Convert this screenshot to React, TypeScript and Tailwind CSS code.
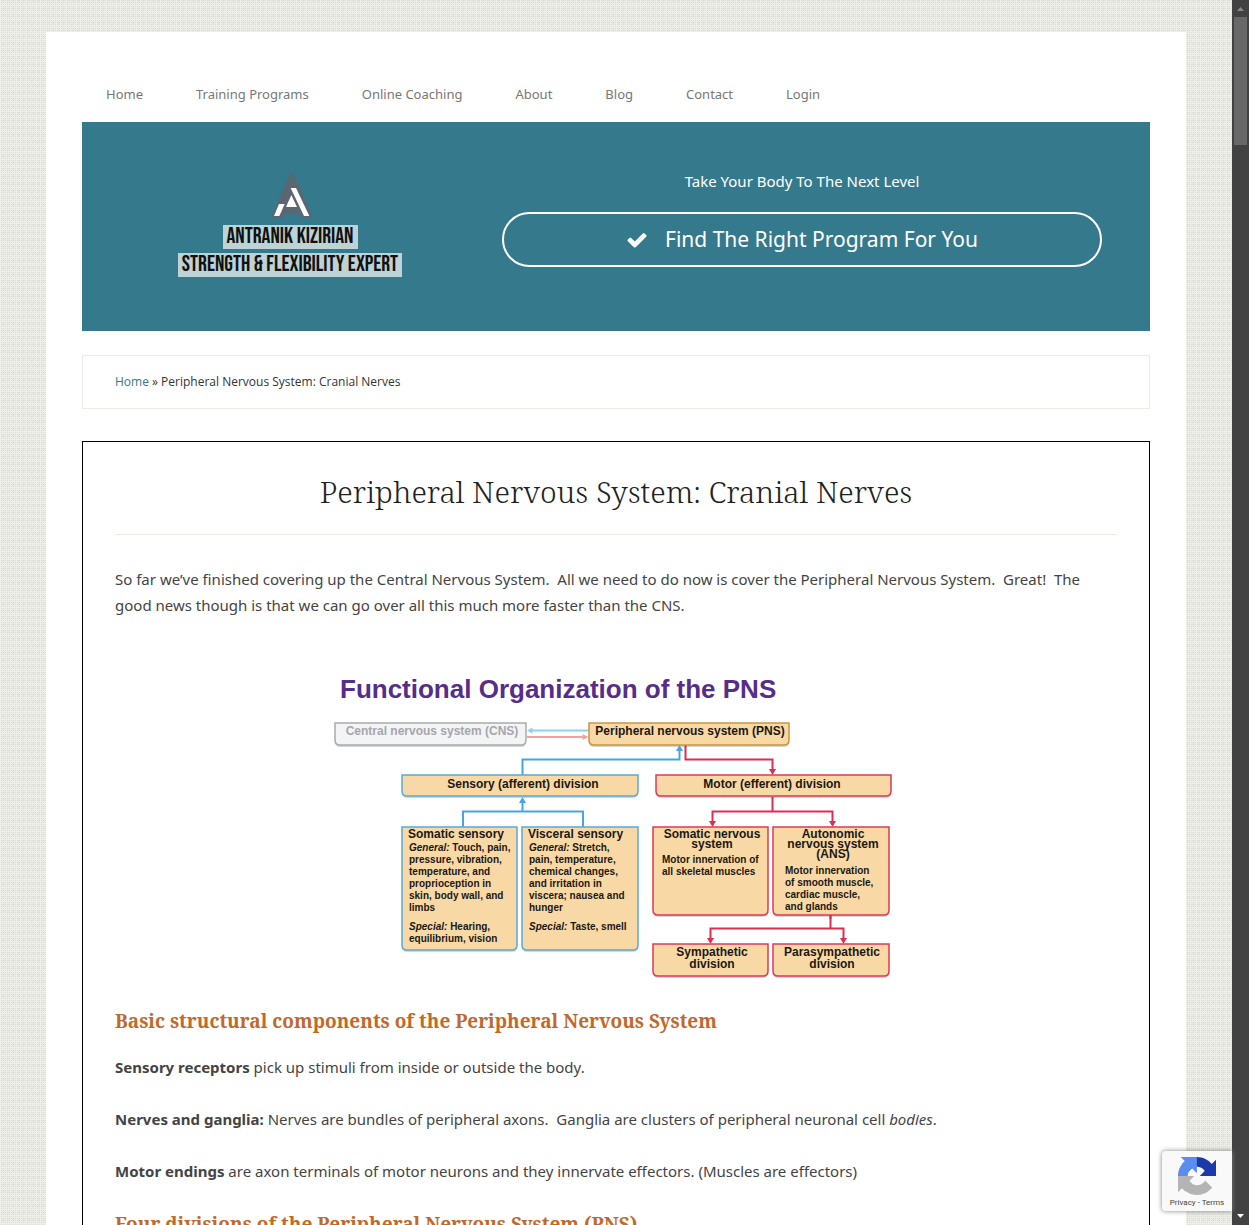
import React from 'react';

const SANS = "font-['Droid_Sans','Noto_Sans',sans-serif]";
const SLAB = "font-['Roboto_Slab','Noto_Serif',serif]";

const NAV = ['Home', 'Training Programs', 'Online Coaching', 'About', 'Blog', 'Contact', 'Login'];

function Header() {
  return (
    <nav aria-label="Main">
      <ul className="flex flex-wrap gap-x-[53px] px-6 pt-[51px] pb-[17px] text-[13px] leading-[22px] text-[#777]">
        {NAV.map((item) => (
          <li key={item}>
            <a href="#">{item}</a>
          </li>
        ))}
      </ul>
    </nav>
  );
}

function LogoMark() {
  return (
    <svg className="mt-[3px] mb-[2px] ml-1 h-[46px] w-[44px]" viewBox="330 39 132 138" aria-hidden="true">
      <path d="M389 46Q395 38 402 46L459 173H424L418 160H374L368 173H333Z" fill="#5b6670" />
      <path d="M392 84H408L448 168H432Z" fill="#fff" />
      <path d="M394 105L411 141H378Z" fill="#fff" />
      <path d="M357 132H374L358 168H342Z" fill="#fff" />
    </svg>
  );
}

function Banner() {
  return (
    <section className="flex justify-between bg-[#35798c] px-12 pt-12 pb-[54px]">
      <a
        href="#"
        className="flex w-80 flex-col items-center gap-1 font-['Bebas_Neue','Open_Sans_Condensed',sans-serif] text-[22px] leading-6 text-[#111]"
      >
        <LogoMark />
        <span className="bg-[#bdd3d5] px-1">ANTRANIK KIZIRIAN</span>
        <span className="bg-[#bdd3d5] px-1">STRENGTH &amp; FLEXIBILITY EXPERT</span>
      </a>
      <div className="flex w-[600px] flex-col text-center text-white">
        <p className="text-[15px] leading-[22px]">Take Your Body To The Next Level</p>
        <a
          href="#"
          className="mt-5 flex h-[55px] items-center justify-center gap-[17px] rounded-full border-2 border-white text-[21px]"
        >
          <svg className="h-[22px] w-[22px]" viewBox="0 0 1792 1792" fill="currentColor" aria-hidden="true">
            <path d="M1671 566q0 40-28 68l-724 724-136 136q-28 28-68 28t-68-28l-136-136-362-362q-28-28-28-68t28-68l136-136q28-28 68-28t68 28l294 295 656-657q28-28 68-28t68 28l136 136q28 28 28 68z" />
          </svg>
          Find The Right Program For You
        </a>
      </div>
    </section>
  );
}

type Tone = 'gray' | 'gold' | 'blue' | 'red';
const STROKE: Record<Tone, string> = { gray: '#a9abae', gold: '#c9963f', blue: '#55abdb', red: '#dc3a58' };

function Box({ x, y, w, h, tone }: { x: number; y: number; w: number; h: number; tone: Tone }) {
  const d = `M${x} ${y}h${w}v${h - 5}q0 5 -5 5h${10 - w}q-5 0 -5 -5z`;
  return (
    <g>
      <path d={d} transform="translate(0 2)" fill="#000" opacity="0.16" />
      <path d={d} fill={tone === 'gray' ? '#f3f4f6' : '#f8d9a6'} stroke={STROKE[tone]} strokeWidth="1.5" />
    </g>
  );
}

function Lines({ x, y, step, rows, anchor = 'start', size = 10 }: {
  x: number; y: number; step: number; rows: React.ReactNode[]; anchor?: 'start' | 'middle'; size?: number;
}) {
  return (
    <text x={x} y={y} textAnchor={anchor} fontSize={size}>
      {rows.map((row, i) => (
        <tspan key={i} x={x} y={y + i * step}>{row}</tspan>
      ))}
    </text>
  );
}

const It = ({ children }: { children: React.ReactNode }) => <tspan fontStyle="italic">{children}</tspan>;

function Diagram() {
  return (
    <svg
      className="mx-auto block w-full max-w-[600px] font-['Liberation_Sans',Arial,sans-serif]"
      viewBox="316 650 600 340"
      fontWeight="700"
      fill="#1c1712"
      role="img"
      aria-label="Functional Organization of the PNS"
    >
      <text x="340" y="699" fontSize="26" fill="#562d88">Functional Organization of the PNS</text>

      <g fill="none" strokeWidth="2">
        <path d="M589 731.5H531" stroke="#92cff4" />
        <path d="M527 738H584" stroke="#f0a3a3" />
        <g stroke="#45a5e6">
          <path d="M522.5 776V760.5H679.5V752" />
          <path d="M463 828V812.5H583V828M522.5 812.5V804" />
        </g>
        <g stroke="#dc2f50">
          <path d="M685.5 746V760.5H772.5V770" />
          <path d="M772.5 798V812.5M712.5 823V812.5H832.5V823" />
          <path d="M830.5 916V929.5M710.5 940V929.5H843.5V940" />
        </g>
      </g>
      <path d="M527 731.5l5.500-3v6z" fill="#92cff4" />
      <path d="M588.500 738l-6-3v6z" fill="#f0a3a3" />

      <Box x={335} y={724} w={191} h={22} tone="gray" />
      <Box x={589} y={724} w={200} h={22} tone="gold" />
      <Box x={402} y={776} w={236} h={21} tone="blue" />
      <Box x={656} y={776} w={235} h={21} tone="red" />
      <Box x={402} y={828} w={115} h={123} tone="blue" />
      <Box x={522} y={828} w={116} h={123} tone="blue" />
      <Box x={653} y={828} w={115} h={88} tone="red" />
      <Box x={773} y={828} w={116} h={88} tone="red" />
      <Box x={653} y={945} w={115} h={32} tone="red" />
      <Box x={773} y={945} w={116} h={32} tone="red" />

      <g fill="#45a5e6">
        <path d="M679.5 746l3.500 6h-7z" />
        <path d="M522.5 798l3.500 6h-7z" />
      </g>
      <g fill="#dc2f50">
        <path d="M772.5 776l-3.500-6h7z" />
        <path d="M712.5 828l-3.500-6h7z" />
        <path d="M832.5 828l-3.500-6h7z" />
        <path d="M710.5 945l-3.500-6h7z" />
        <path d="M843.5 945l-3.500-6h7z" />
        <path d="M829.500 916h2v4h-2z" />
      </g>

      <g fontSize="12" textAnchor="middle">
        <text x="432" y="736" fill="#a6a6aa">Central nervous system (CNS)</text>
        <text x="690" y="736">Peripheral nervous system (PNS)</text>
        <text x="523" y="789">Sensory (afferent) division</text>
        <text x="772" y="789">Motor (efferent) division</text>
      </g>
      <text x="408" y="839" fontSize="12">Somatic sensory</text>
      <Lines x={409} y={852} step={12} rows={[
        <><It>General:</It> Touch, pain,</>, 'pressure, vibration,', 'temperature, and', 'proprioception in', 'skin, body wall, and', 'limbs',
      ]} />
      <Lines x={409} y={931} step={12} rows={[<><It>Special:</It> Hearing,</>, 'equilibrium, vision']} />
      <text x="528" y="839" fontSize="12">Visceral sensory</text>
      <Lines x={529} y={852} step={12} rows={[
        <><It>General:</It> Stretch,</>, 'pain, temperature,', 'chemical changes,', 'and irritation in', 'viscera; nausea and', 'hunger',
      ]} />
      <Lines x={529} y={931} step={12} rows={[<><It>Special:</It> Taste, smell</>]} />
      <Lines x={712} y={839} step={10} size={12} anchor="middle" rows={['Somatic nervous', 'system']} />
      <Lines x={662} y={864} step={12} rows={['Motor innervation of', 'all skeletal muscles']} />
      <Lines x={833} y={839} step={10} size={12} anchor="middle" rows={['Autonomic', 'nervous system', '(ANS)']} />
      <Lines x={785} y={875} step={12} rows={['Motor innervation', 'of smooth muscle,', 'cardiac muscle,', 'and glands']} />
      <Lines x={712} y={957} step={12} size={12} anchor="middle" rows={['Sympathetic', 'division']} />
      <Lines x={832} y={957} step={12} size={12} anchor="middle" rows={['Parasympathetic', 'division']} />
    </svg>
  );
}

function SectionTitle({ children }: { children: React.ReactNode }) {
  return <h2 className={`${SLAB} text-[19px] leading-6 font-bold text-[#c1692b]`}>{children}</h2>;
}

function Article() {
  return (
    <article className="mt-8 border border-black px-8 pt-8 text-[15px] leading-[26px] text-[#444]">
      <h1 className={`${SLAB} border-b border-[#ecece6] pb-6 text-center text-[30px] leading-9 font-light text-[#222]`}>
        Peripheral Nervous System: Cranial Nerves
      </h1>
      <p className="my-[31px]">
        So far we’ve finished covering up the Central Nervous System.&nbsp; All we need to do now is cover the
        Peripheral Nervous System.&nbsp; Great!&nbsp; The good news though is that we can go over all this much more
        faster than the CNS.
      </p>
      <Diagram />
      <div className="mt-5">
        <SectionTitle>Basic structural components of the Peripheral Nervous System</SectionTitle>
        <p className="mt-[21px] mb-[26px]"><strong>Sensory receptors</strong> pick up stimuli from inside or outside the body.</p>
        <p className="mb-[26px]">
          <strong>Nerves and ganglia:</strong> Nerves are bundles of peripheral axons.&nbsp; Ganglia are clusters of
          peripheral neuronal cell <em>bodies</em>.
        </p>
        <p className="mb-7">
          <strong>Motor endings</strong> are axon terminals of motor neurons and they innervate effectors. (Muscles are
          effectors)
        </p>
        <SectionTitle>Four divisions of the Peripheral Nervous System (PNS)</SectionTitle>
      </div>
    </article>
  );
}

function RecaptchaBadge() {
  return (
    <aside className="absolute right-[17px] bottom-[14px] flex h-[60px] w-[70px] flex-col items-center rounded-l-sm bg-[#f9f9f9] pt-1.5 shadow-[0_0_5px_gray]">
      <svg className="h-[38px] w-[38px]" viewBox="0 0 64 64" aria-hidden="true">
        <path fill="#1c3aa9" d="M64 31.955a33 33 0 0 0-.024-1.37V4.687l-7.16 7.16C50.956 4.674 42.033.093 32.04.093c-10.4 0-19.638 4.96-25.472 12.64L18.304 24.6a15.550 15.550 0 0 1 4.754-5.334c2.050-1.600 4.952-2.906 8.968-2.906.485 0 .860.057 1.135.163 4.976.393 9.288 3.140 11.828 7.124l-8.307 8.307L64 31.953" />
        <path fill="#5b8def" d="M31.862.094a33 33 0 0 0-1.370.024H4.594l7.160 7.160C4.580 13.138 0 22.060 0 32.055c0 10.400 4.960 19.638 12.640 25.472L24.507 45.790a15.550 15.550 0 0 1-5.334-4.754c-1.600-2.050-2.906-4.952-2.906-8.968 0-.485.057-.860.163-1.135.393-4.976 3.140-9.288 7.124-11.828l8.307 8.307L31.860.095" />
        <path fill="#b4b4b4" d="M.001 32.045a33 33 0 0 0 .024 1.370v25.898l7.160-7.160c5.860 7.173 14.774 11.754 24.767 11.754 10.400 0 19.638-4.960 25.472-12.640L45.697 39.400a15.550 15.550 0 0 1-4.754 5.334c-2.050 1.600-4.952 2.906-8.968 2.906-.485 0-.860-.057-1.135-.163-4.976-.393-9.288-3.140-11.828-7.124l8.307-8.307c-10.522.040-22.400.066-27.318-.005" />
      </svg>
      <p className="mt-0.5 font-[Roboto,sans-serif] text-[8px] leading-3 whitespace-nowrap text-[#444]">
        <a href="#">Privacy</a> - <a href="#">Terms</a>
      </p>
    </aside>
  );
}

function Scrollbar() {
  return (
    <div className="flex w-[17px] shrink-0 flex-col items-center bg-[#424242]" aria-hidden="true">
      <svg className="h-[17px] w-[17px] shrink-0" viewBox="0 0 17 17"><path d="M5 11L8.500 7L12 11Z" fill="#8a8a8a" /></svg>
      <div className="h-32 w-[13px] bg-[#686868]" />
      <svg className="mt-auto h-[17px] w-[17px] shrink-0" viewBox="0 0 17 17"><path d="M5 6H12L8.500 10Z" fill="#fff" /></svg>
    </div>
  );
}

export default function App() {
  return (
    <div className={`${SANS} relative flex h-screen overflow-hidden bg-[#efefea]`}>
      <div className="flex-1 overflow-hidden bg-[conic-gradient(#cdd0ce99_25%,transparent_0),conic-gradient(#dcddd866_25%,transparent_0)] [background-size:2px_2px,5px_7px] pt-8">
        <div className="mx-auto max-w-[1140px] bg-white px-9">
          <Header />
          <main>
            <Banner />
            <nav
              aria-label="Breadcrumb"
              className="mt-6 border border-[#ecece6] px-8 py-[13px] font-['Open_Sans',sans-serif] text-[12px] leading-[26px] text-[#333]"
            >
              <a href="#" className="text-[#35798c]">Home</a> » Peripheral Nervous System: Cranial Nerves
            </nav>
            <Article />
          </main>
        </div>
      </div>
      <Scrollbar />
      <RecaptchaBadge />
    </div>
  );
}
